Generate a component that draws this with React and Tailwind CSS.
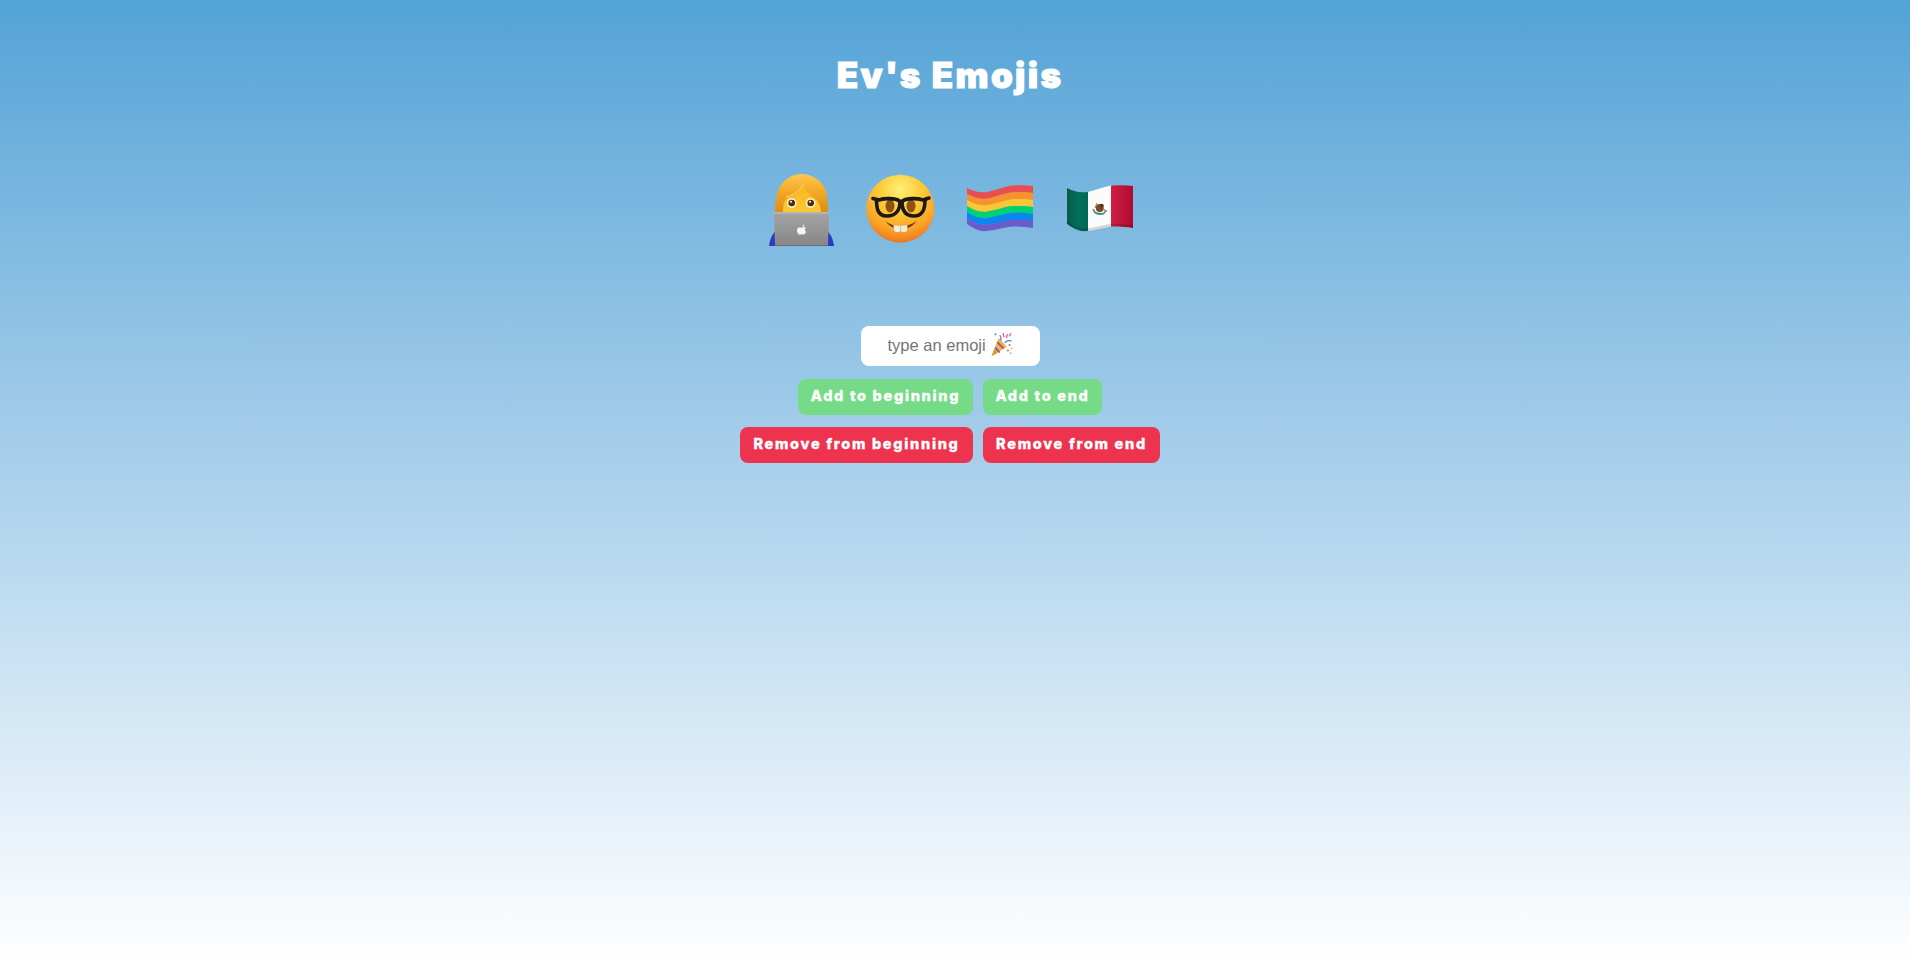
import React, { useState } from 'react';

const displayFont = "font-['Inter',sans-serif]";

// control points of the flag wave, top edge and bottom edge
const TOP = [4, 7, 9, 8, 6, 2, 1.5, 1, 1, 2];
const BOTTOM = [40, 44, 48, 47, 46, 43, 42.5, 42.5, 43, 44];
const X = [0, 6, 12, 20, 30, 38, 46, 54, 60, 66];

const edge = (t) => TOP.map((y, i) => y + (BOTTOM[i] - y) * t);

const bandPath = (t0, t1) => {
  const a = edge(t0);
  const b = edge(t1);
  const fwd = `M${X[0]} ${a[0]} C${X[1]} ${a[1]} ${X[2]} ${a[2]} ${X[3]} ${a[3]} C${X[4]} ${a[4]} ${X[5]} ${a[5]} ${X[6]} ${a[6]} C${X[7]} ${a[7]} ${X[8]} ${a[8]} ${X[9]} ${a[9]}`;
  const back = `L${X[9]} ${b[9]} C${X[8]} ${b[8]} ${X[7]} ${b[7]} ${X[6]} ${b[6]} C${X[5]} ${b[5]} ${X[4]} ${b[4]} ${X[3]} ${b[3]} C${X[2]} ${b[2]} ${X[1]} ${b[1]} ${X[0]} ${b[0]} Z`;
  return `${fwd} ${back}`;
};

const PersonLaptop = () => (
  <svg width="66" height="72" viewBox="0 0 66 72">
    <defs>
      <linearGradient id="hair" x1="0" y1="0" x2="0" y2="1">
        <stop offset="0" stopColor="#fcc94f" />
        <stop offset="0.45" stopColor="#f4a826" />
        <stop offset="1" stopColor="#d88c12" />
      </linearGradient>
      <linearGradient id="skin" x1="0" y1="0" x2="0" y2="1">
        <stop offset="0" stopColor="#f9b51c" />
        <stop offset="1" stopColor="#fdc936" />
      </linearGradient>
      <linearGradient id="laptop" x1="0" y1="0" x2="0" y2="1">
        <stop offset="0" stopColor="#a4a4a4" />
        <stop offset="1" stopColor="#868686" />
      </linearGradient>
    </defs>
    <path d="M0 72 C1 65 3 60 7 57 L58 57 C62 60 64 65 65 72 Z" fill="#2a3bc4" />
    <path d="M6 40 C6 26 8 17 12 11 C17 4 24 0 32.5 0 C41 0 49 4 54 11 C58 17 59 26 59 40 Z" fill="url(#hair)" />
    <path d="M14 40 C14 31 15 26 19 23 C26 23 32 18 35 10 C37 18 42 23 48 26 C51 30 52 35 52 40 Z" fill="url(#skin)" />
    <path d="M35 10 C30 18 24 22 17 23" fill="none" stroke="#fbd26a" strokeWidth="1.5" opacity="0.7" />
    <circle cx="22.7" cy="29" r="5" fill="#fdeec2" />
    <circle cx="41.7" cy="29" r="5" fill="#fdeec2" />
    <circle cx="22.7" cy="29" r="3.3" fill="#4f2e10" />
    <circle cx="41.7" cy="29" r="3.3" fill="#4f2e10" />
    <circle cx="22" cy="27.8" r="1" fill="#fff" />
    <circle cx="41" cy="27.8" r="1" fill="#fff" />
    <path d="M5 39 Q5 38 6 38 L59 38 Q60 38 60 39 L59 72 L6 72 Z" fill="url(#laptop)" />
    <path d="M5 39 L60 39" stroke="#c4c4c4" strokeWidth="1" />
    <path d="M6 71.5 L59 71.5" stroke="#6f6f6f" strokeWidth="1" />
    <path d="M33.5 53.5 C34.8 52.8 36.2 53 36.8 54 C35.4 55 35.6 57 37.2 57.6 C36.6 59.2 35.6 60.6 34.4 60.6 C33.6 60.6 33.2 60.2 32.4 60.2 C31.6 60.2 31 60.6 30.4 60.6 C29 60.6 27.8 57.8 28 56 C28.2 54 30 53 31.4 53.4 C32.2 53.6 32.8 53.8 33.5 53.5 Z M33.4 52.8 C33.4 51.6 34.2 50.6 35.4 50.4 C35.4 51.8 34.6 52.8 33.4 52.8 Z" fill="#f4f4f4" />
  </svg>
);

const NerdFace = () => (
  <svg width="70" height="70" viewBox="0 0 70 70">
    <defs>
      <radialGradient id="face" cx="0.5" cy="0.22" r="0.82">
        <stop offset="0" stopColor="#fff176" />
        <stop offset="0.4" stopColor="#fdc836" />
        <stop offset="0.72" stopColor="#fba428" />
        <stop offset="1" stopColor="#e86e1e" />
      </radialGradient>
    </defs>
    <circle cx="35.3" cy="34.7" r="34" fill="url(#face)" />
    <ellipse cx="25" cy="32" rx="4.5" ry="6.5" fill="#8f5213" />
    <ellipse cx="46" cy="32" rx="4.5" ry="6.5" fill="#8f5213" />
    <path d="M8 24.5 L14 26 C20 24 30 24 34.5 27 C36 28 36 28 37.5 27 C42 24 52 24 58 26 L64 24" fill="none" stroke="#1b1916" strokeWidth="3.6" strokeLinejoin="round" strokeLinecap="round" />
    <path d="M11.5 26 C11.5 35 13 42 22 42 C31 42 35 36 35 27.5 M37 27.5 C37 36 40 42 49 42 C58 42 60 35 60 26" fill="none" stroke="#1b1916" strokeWidth="3.6" />
    <path d="M20 46 C26 54 45 54 52 46 C46 58 26 58 20 46 Z" fill="#6e3a12" />
    <path d="M28.5 51 C32 52 39 52 42.5 51 L42 56.5 C41.5 58.6 37.4 58.6 35.6 57 C33.8 58.6 29.8 58.6 29.2 56.5 Z" fill="#efece2" />
    <path d="M35.6 52 L35.6 57" stroke="#b9b4a4" strokeWidth="0.8" />
  </svg>
);

const RainbowFlag = () => {
  const colors = ['#e84f52', '#f6932f', '#fbc636', '#00d175', '#0a86f2', '#6a5cc9'];
  return (
    <svg width="66" height="48" viewBox="0 0 66 48">
      {colors.map((color, i) => (
        <path key={color} d={bandPath(i / 6, Math.min((i + 1.05) / 6, 1))} fill={color} />
      ))}
    </svg>
  );
};

const MexicoFlag = () => (
  <svg width="66" height="48" viewBox="0 0 66 48">
    <defs>
      <clipPath id="mx">
        <path d={bandPath(0, 1)} />
      </clipPath>
      <linearGradient id="mxGreen" x1="0" y1="0" x2="1" y2="0">
        <stop offset="0" stopColor="#0a5a48" />
        <stop offset="0.5" stopColor="#00705a" />
        <stop offset="1" stopColor="#006a52" />
      </linearGradient>
      <linearGradient id="mxRed" x1="0" y1="0" x2="1" y2="0">
        <stop offset="0" stopColor="#d01f45" />
        <stop offset="1" stopColor="#b00a30" />
      </linearGradient>
    </defs>
    <g clipPath="url(#mx)">
      <rect x="0" y="0" width="22" height="48" fill="url(#mxGreen)" />
      <rect x="21" y="0" width="24" height="48" fill="#fbfbfb" />
      <rect x="44" y="0" width="22" height="48" fill="url(#mxRed)" />
      <path d={bandPath(0.93, 1)} fill="#000" opacity="0.15" />
    </g>
    <path d="M26.2 25 A7 7 0 0 0 39.4 26" fill="none" stroke="#5d8a5c" strokeWidth="1.6" />
    <circle cx="32.8" cy="24" r="4" fill="#7b4a28" />
    <circle cx="34.8" cy="21.5" r="1.8" fill="#4e2e18" />
    <path d="M29 29 L36.5 30" stroke="#3f8fb0" strokeWidth="1.4" />
    <path d="M30 19 L28 24 M37 25 L38.5 28" stroke="#a9743f" strokeWidth="1" />
  </svg>
);

const PartyPopper = () => (
  <svg width="23" height="25" viewBox="0 0 21 23">
    <path d="M0.5 22 L7 5.5 L14.5 13.5 Z" fill="#f2b632" />
    <path d="M0.5 22 L3 15.5 L6.2 19.4 Z" fill="#e39a1d" />
    <path d="M3.6 14.2 L8 19 M5.6 9.4 L11.6 15.4" stroke="#8a52c8" strokeWidth="1.6" fill="none" />
    <path d="M8 3 Q10 6 8.5 8 M12.5 10 Q15 7 19 8.5" stroke="#5b7fdc" strokeWidth="1.2" fill="none" />
    <path d="M11 1 L12 5 M15 2 L14 5.5 M18 1 L17 4" stroke="#e5568f" strokeWidth="1.2" fill="none" />
    <circle cx="17" cy="12" r="0.9" fill="#e5568f" />
    <circle cx="19" cy="15" r="0.8" fill="#e9b04a" />
    <circle cx="15.5" cy="17" r="0.9" fill="#e5568f" />
    <circle cx="18" cy="19.5" r="0.8" fill="#d9a0b8" />
    <circle cx="4" cy="2" r="0.9" fill="#5b7fdc" />
  </svg>
);

const ActionButton = ({ className, children }) => (
  <button
    type="button"
    className={`h-9 pb-[2px] rounded-lg text-white text-[14.5px] font-extrabold tracking-[1.7px] [-webkit-text-stroke:0.3px_white] ${displayFont} ${className}`}
  >
    {children}
  </button>
);

export default function App() {
  const [value, setValue] = useState('');

  return (
    <div className="w-full h-[965px] pr-[10px] flex flex-col items-center bg-gradient-to-b from-[#52a3d6] to-white">
      <h1 className={`mt-[48px] h-[54px] leading-[54px] text-white text-[35px] font-black tracking-[2.3px] [-webkit-text-stroke:1px_white] ${displayFont}`}>
        Ev's Emojis
      </h1>

      <div className="mt-[72px] flex h-[72px] items-start">
        <div className="w-[100px] pl-[3px] flex justify-center"><PersonLaptop /></div>
        <div className="w-[100px] flex justify-center"><NerdFace /></div>
        <div className="w-[100px] flex justify-center pt-[10px]"><RainbowFlag /></div>
        <div className="w-[100px] flex justify-center pt-[10px]"><MexicoFlag /></div>
      </div>

      <div className="relative mt-[80px]">
        <input
          value={value}
          onChange={(e) => setValue(e.target.value)}
          placeholder="type an emoji"
          className="w-[179px] h-10 pb-[2px] rounded-lg bg-white pl-[27px] pr-2 text-[16.5px] font-['Liberation_Sans',sans-serif] text-gray-800 placeholder:text-[#757575] outline-none"
        />
        {!value && (
          <span className="absolute left-[130px] top-[6px] pointer-events-none">
            <PartyPopper />
          </span>
        )}
      </div>

      <div className="mt-[13px] flex gap-[10px]">
        <ActionButton className="w-[175px] bg-[#75db86]">Add to beginning</ActionButton>
        <ActionButton className="w-[119px] bg-[#75db86]">Add to end</ActionButton>
      </div>
      <div className="mt-[12px] flex gap-[10px]">
        <ActionButton className="w-[233px] bg-[#ee334f]">Remove from beginning</ActionButton>
        <ActionButton className="w-[177px] bg-[#ee334f]">Remove from end</ActionButton>
      </div>
    </div>
  );
}
